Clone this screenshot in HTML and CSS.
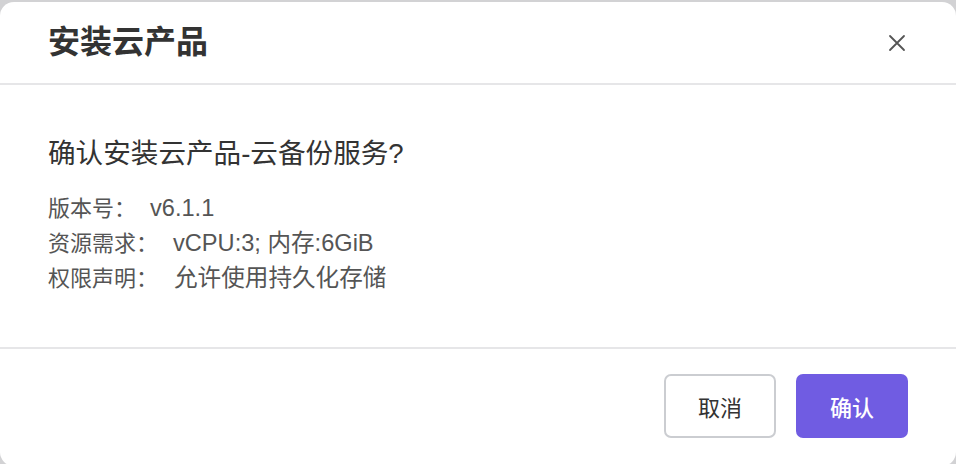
FILE: index.html
```html
<!DOCTYPE html>
<html lang="zh-CN">
<head>
<meta charset="utf-8">
<title>安装云产品</title>
<link rel="stylesheet" href="styles.css">
</head>
<body>
<div class="backdrop">
  <div class="dialog">
    <div class="dialog-header">
      <h2 class="dialog-title">安装云产品</h2>
      <button class="close-btn" aria-label="关闭">
        <svg width="18" height="18" viewBox="0 0 18 18"><path d="M2 2 L16 16 M16 2 L2 16" stroke="#555" stroke-width="1.8" fill="none" stroke-linecap="round"/></svg>
      </button>
    </div>
    <div class="dialog-body">
      <p class="question">确认安装云产品-云备份服务?</p>
      <div class="details">
        <div class="row"><span class="label">版本号：</span><span class="value v1">v6.1.1</span></div>
        <div class="row"><span class="label">资源需求：</span><span class="value v2">vCPU:3; 内存:6GiB</span></div>
        <div class="row"><span class="label">权限声明：</span><span class="value v3">允许使用持久化存储</span></div>
      </div>
    </div>
    <div class="dialog-footer">
      <button class="btn btn-cancel">取消</button>
      <button class="btn btn-primary">确认</button>
    </div>
  </div>
</div>
</body>
</html>
```
FILE: styles.css
```css
* { box-sizing: border-box; }
html, body {
  margin: 0;
  padding: 0;
  width: 956px;
  height: 464px;
  overflow: hidden;
  background: #d2d2d4;
  font-family: "Liberation Sans", "Noto Sans CJK SC", sans-serif;
}
.backdrop {
  padding-top: 2px;
}
.dialog {
  width: 956px;
  height: 464px;
  background: #fff;
  border-radius: 14px;
  display: flex;
  flex-direction: column;
}
.dialog-header {
  height: 83px;
  border-bottom: 2px solid #e6e6e8;
  display: flex;
  align-items: center;
  justify-content: space-between;
  padding: 0 50px 0 48px;
}
.dialog-title {
  margin: 0;
  font-size: 32px;
  font-weight: 700;
  color: #333;
  line-height: 40px;
  padding-bottom: 1px;
}
.close-btn {
  border: 0;
  background: none;
  padding: 0;
  width: 18px;
  height: 18px;
  display: flex;
  cursor: pointer;
}
.dialog-body {
  height: 264px;
  border-bottom: 2px solid #e6e6e8;
  padding: 49px 48px 0 48px;
}
.question {
  margin: 0;
  font-size: 27.6px;
  line-height: 40px;
  color: #333;
}
.details {
  margin-top: 17px;
  font-size: 22px;
  line-height: 34px;
  color: #555;
}
.row {
  display: flex;
  align-items: baseline;
}
.value { font-size: 23.6px; }
.v1 { margin-left: 14px; }
.v2 { margin-left: 15px; }
.v3 { margin-left: 16px; }
.dialog-footer {
  flex: 1;
  display: flex;
  justify-content: flex-end;
  align-items: flex-start;
  gap: 20px;
  padding: 25px 48px 0 0;
}
.btn {
  width: 112px;
  height: 64px;
  border-radius: 7px;
  font-family: "Liberation Sans", "Noto Sans CJK SC", sans-serif;
  font-size: 22px;
  cursor: pointer;
}
.btn-cancel {
  background: #fff;
  border: 2px solid #cbcdd1;
  color: #333;
}
.btn-primary {
  background: #705ce2;
  border: 0;
  color: #fff;
  font-weight: 500;
}
```
